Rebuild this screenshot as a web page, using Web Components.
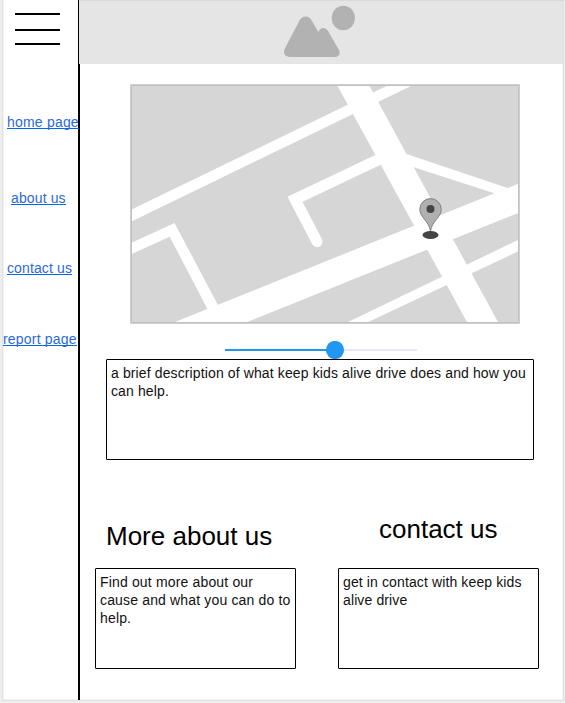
<!DOCTYPE html>
<html lang="en"><head><meta charset="utf-8"><title>Keep Kids Alive Drive</title>
<style>html,body{margin:0;height:703px;overflow:hidden;background:#eee;font-family:"Liberation Sans",Arial,sans-serif}</style>
</head><body>
<app-page></app-page>
<script>
const define=(name,html)=>customElements.define(name,class extends HTMLElement{
  constructor(){super();const t=document.createElement('template');t.innerHTML=html;
    this.attachShadow({mode:'open'}).append(t.content.cloneNode(true));}
});
define('menu-button',`<style>:host{display:block;width:45px;height:32px}svg{display:block}</style>
<svg width="45" height="32"><path d="M0 1h45M0 17h45M0 31h45" stroke="#000" stroke-width="2"/></svg>`);
define('nav-link',`<style>:host{display:block;height:18px;font-size:14px;line-height:18px;white-space:nowrap}
a{display:inline-block;height:15px;line-height:18px;color:#2a69dc;border-bottom:1px solid #0066ea;letter-spacing:var(--ls,.2px)}</style><a><slot></slot></a>`);
define('image-banner',`<style>:host{display:block;height:64px;background:#e5e5e5;margin-left:-1px;box-shadow:inset 0 1px #d9d9d9}svg{display:block;margin-left:204px}</style>
<svg width="74" height="64" viewBox="283 0 74 64" fill="#b2b2b2"><ellipse cx="343.3" cy="18" rx="11.6" ry="12.2"/>
<path d="M290 57C285 57 283 53 284.6 49L299 21.5C302 15 309 15 312 21L318.3 32C320.5 27 325.5 27 328 31L338.7 49.5C341 54 339 57 335 57Z"/></svg>`);
define('road-map',`<style>:host{display:block;width:390px;height:240px}svg{display:block}</style>
<svg width="390" height="240" viewBox="130 84 390 240"><path fill="#d6d6d6" d="M130 84h390v240H130z"/>
<g fill="#fff"><path d="M131 209.7 388.5 85H413L131 221.7z"/><path d="M337 85H369L498.5 323H467.5z"/>
<path d="M172.5 323 519 183.5V212.7L244.5 323z"/><path d="M403 152.7 507.5 188 495 193.5 410 166z"/>
<path d="M131 243 174.5 223 218.5 306 208 310 169.7 236.7 131 254.3z"/>
<path d="M346 323 519 239.5V251L366 323z"/></g>
<path d="M383 157.5 295 199.3 317 241.5" fill="none" stroke="#fff" stroke-width="11" stroke-linecap="round"/>
<path d="M130.5 84.5h389v239h-389z" fill="none" stroke="#d0d0d0"/><path d="M131.5 85.5h387v237h-387z" fill="none" stroke="#c0c0c0"/>
<ellipse cx="430.5" cy="235" rx="8" ry="4" fill="#444"/>
<path d="M430.5 231C429 221 419.8 217.5 419.8 209.3a10.7 10.7 0 0 1 21.4 0C441.2 217.5 432 221 430.5 231z" fill="#b0b0b0" stroke="#777" stroke-width=".9"/>
<circle cx="430.5" cy="209" r="4" fill="#444"/></svg>`);
define('range-slider',`<style>:host{display:block;width:192px;height:18px}svg{display:block}</style>
<svg width="192" height="18"><path d="M0 8h192v2H0z" fill="#e6e8f6"/><path d="M0 8h110v2H0z" fill="#2196f3"/><circle cx="110" cy="9" r="9.1" fill="#2196f3"/></svg>`);
define('text-box',`<style>:host{display:block;box-sizing:border-box;height:101px;border:1px solid #000;border-radius:1px;padding:4px 0 0 4px;font-size:14px;line-height:18px;color:#111;white-space:nowrap;letter-spacing:var(--ls,.12px)}</style><slot></slot>`);
define('section-title',`<style>:host{display:block;font-size:26px;line-height:30px;height:30px;white-space:nowrap}</style><slot></slot>`);
define('info-section',`<style>:host{display:flex;flex-direction:column;justify-content:space-between;width:201px;height:148px}</style>
<slot name="title"></slot><slot></slot>`);
define('side-bar',`<style>:host{display:block;box-sizing:border-box;width:77px;height:700px;border-right:2px solid #000}
menu-button{padding:13px 0 0 12px}nav{display:flex;flex-direction:column}
nav-link:nth-child(1){margin:68px 0 0 4px}nav-link:nth-child(2){margin:58px 0 0 8px;--ls:.13px}nav-link:nth-child(3){margin:52px 0 0 4px;--ls:.12px}nav-link:nth-child(4){margin:53px 0 0 0}</style>
<menu-button></menu-button><nav><nav-link>home page</nav-link><nav-link>about us</nav-link><nav-link>contact us</nav-link><nav-link>report page</nav-link></nav>`);
define('app-page',`<style>:host{display:flex;box-sizing:border-box;width:562px;height:701px;margin-left:2px;background:#fff;border:1px solid #e0e0e0;border-top:0;box-shadow:inset 1px 0 #f5f5f5,inset -1px -1px #f5f5f5}
main{flex:1;min-width:0}
road-map{margin:20px 0 0 50px}range-slider{margin:17px 0 0 145px}.intro{width:428px;margin:0 0 0 26px}
.row{display:flex;gap:42px;margin:61px 0 0 15px}.a{padding-left:11px}.b{padding-left:41px;margin-top:-7px}.cause{--ls:.16px}</style>
<side-bar></side-bar><main><image-banner></image-banner><road-map></road-map><range-slider></range-slider>
<text-box class="intro">a brief description of what keep kids alive drive does and how you<br>can help.</text-box>
<div class="row"><info-section><section-title slot="title" class="a">More about us</section-title><text-box class="cause">Find out more about our<br>cause and what you can do to<br>help.</text-box></info-section>
<info-section><section-title slot="title" class="b">contact us</section-title><text-box>get in contact with keep kids<br>alive drive</text-box></info-section></div></main>`);
</script></body></html>
